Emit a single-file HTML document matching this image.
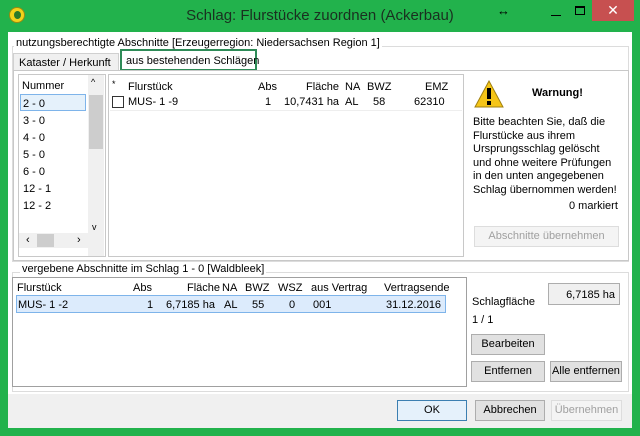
<!DOCTYPE html><html><head><style>
*{box-sizing:border-box;margin:0;padding:0}
body{width:640px;height:436px;background:#22b24c;font-family:"Liberation Sans",sans-serif;font-size:11px;color:#000;position:relative;overflow:hidden}
.a{position:absolute;white-space:nowrap}
.btn{position:absolute;border:1px solid #adadad;background:#e1e1e1;text-align:center;line-height:19px;font-size:11px}
.tb{border:1px solid #c8c8c8}
</style></head><body>
<div class="a" style="left:9px;top:7px;width:16px;height:16px;border-radius:50%;background:#f2d21a;border:1px solid #9a8a10"></div>
<div class="a" style="left:14px;top:11px;width:7px;height:8px;border-radius:50%;background:#2a7a2a"></div>
<div class="a" style="left:0;top:7px;width:640px;text-align:center;font-size:15px;color:#1a3020">Schlag: Flurstücke zuordnen (Ackerbau)</div>
<div class="a" style="left:497px;top:3px;font-size:13px">↔</div>
<div class="a" style="left:551px;top:15px;width:10px;height:1px;background:#000"></div>
<div class="a" style="left:575px;top:6px;width:10px;height:9px;border:1px solid #000;border-top-width:2px"></div>
<div class="a" style="left:592px;top:0;width:42px;height:21px;background:#c75050;color:#fff;text-align:center;font-size:14px;line-height:21px">✕</div>
<div class="a" style="left:8px;top:32px;width:624px;height:396px;background:#f0f0f0"></div>
<div class="a" style="left:8px;top:32px;width:624px;height:362px;background:#fff"></div>
<div class="a tb" style="left:12px;top:46px;width:617px;height:216px;border-color:#dcdcdc"></div>
<div class="a" style="left:14px;top:37px;background:#fff;padding:0 2px">nutzungsberechtigte Abschnitte [Erzeugerregion: Niedersachsen Region 1]</div>
<div class="a" style="left:13px;top:53px;width:106px;height:18px;border:1px solid #d0d0d0;background:#f0f0f0;padding:3px 0 0 5px">Kataster / Herkunft</div>
<div class="a" style="left:120px;top:49px;width:137px;height:22px;border:2px solid #2e8b57;background:#fff;padding:4px 0 0 4px">aus bestehenden Schlägen</div>
<div class="a tb" style="left:13px;top:70px;width:616px;height:191px"></div>
<div class="a tb" style="left:18px;top:74px;width:88px;height:183px;background:#fff"></div>
<div class="a" style="left:88px;top:75px;width:16px;height:181px;background:#f0f0f0"></div>
<div class="a" style="left:89px;top:95px;width:14px;height:54px;background:#cdcdcd"></div>
<div class="a" style="left:91px;top:77px;font-size:9px">^</div>
<div class="a" style="left:92px;top:222px;font-size:9px">v</div>
<div class="a" style="left:19px;top:233px;width:69px;height:15px;background:#f0f0f0"></div>
<div class="a" style="left:37px;top:234px;width:17px;height:13px;background:#cdcdcd"></div>
<div class="a" style="left:26px;top:234px">‹</div><div class="a" style="left:77px;top:234px">›</div>
<div class="a" style="left:22px;top:80px">Nummer</div>
<div class="a" style="left:20px;top:94px;width:66px;height:17px;border:1px solid #7eb4ea;background:#e5f1fb"></div>
<div class="a" style="left:23px;top:96px;line-height:17px">2 - 0<br>3 - 0<br>4 - 0<br>5 - 0<br>6 - 0<br>12 - 1<br>12 - 2</div>
<div class="a tb" style="left:108px;top:74px;width:356px;height:183px;background:#fff"></div>
<div class="a" style="left:112px;top:79px;font-size:9px">*</div>
<div class="a" style="left:128px;top:81px">Flurstück</div>
<div class="a" style="left:258px;top:81px">Abs</div>
<div class="a" style="left:306px;top:81px">Fläche</div>
<div class="a" style="left:345px;top:81px">NA</div>
<div class="a" style="left:367px;top:81px">BWZ</div>
<div class="a" style="left:425px;top:81px">EMZ</div>
<div class="a" style="left:112px;top:96px;width:12px;height:12px;border:1px solid #333"></div>
<div class="a" style="left:128px;top:96px">MUS- 1 -9</div>
<div class="a" style="left:265px;top:96px">1</div>
<div class="a" style="left:284px;top:96px">10,7431 ha</div>
<div class="a" style="left:345px;top:96px">AL</div>
<div class="a" style="left:373px;top:96px">58</div>
<div class="a" style="left:414px;top:96px">62310</div>
<div class="a" style="left:110px;top:110px;width:352px;height:1px;background:#eee"></div>
<svg class="a" style="left:474px;top:80px" width="30" height="28"><polygon points="15,1 29,27 1,27" fill="#f5c518" stroke="#a08010"/><rect x="13" y="8" width="4" height="11" fill="#000"/><rect x="13" y="21" width="4" height="4" fill="#000"/></svg>
<div class="a" style="left:532px;top:87px;font-weight:bold">Warnung!</div>
<div class="a" style="left:473px;top:116px;line-height:13.5px">Bitte beachten Sie, daß die<br>Flurstücke aus ihrem<br>Ursprungsschlag gelöscht<br>und ohne weitere Prüfungen<br>in den unten angegebenen<br>Schlag übernommen werden!</div>
<div class="a" style="left:569px;top:200px">0 markiert</div>
<div class="btn" style="left:474px;top:226px;width:145px;height:21px;color:#a0a0a0;background:#f4f4f4;border-color:#ddd">Abschnitte übernehmen</div>
<div class="a tb" style="left:12px;top:272px;width:617px;height:120px;border-color:#dcdcdc"></div>
<div class="a" style="left:20px;top:263px;background:#fff;padding:0 2px">vergebene Abschnitte im Schlag 1 - 0 [Waldbleek]</div>
<div class="a tb" style="left:12px;top:277px;width:455px;height:110px;border-color:#a0a0a0;background:#fff"></div>
<div class="a" style="left:17px;top:282px">Flurstück</div>
<div class="a" style="left:133px;top:282px">Abs</div>
<div class="a" style="left:187px;top:282px">Fläche</div>
<div class="a" style="left:222px;top:282px">NA</div>
<div class="a" style="left:245px;top:282px">BWZ</div>
<div class="a" style="left:278px;top:282px">WSZ</div>
<div class="a" style="left:311px;top:282px">aus Vertrag</div>
<div class="a" style="left:384px;top:282px">Vertragsende</div>
<div class="a" style="left:16px;top:295px;width:430px;height:18px;border:1px solid #7eb4ea;background:#dcebfc"></div>
<div class="a" style="left:18px;top:299px">MUS- 1 -2</div>
<div class="a" style="left:147px;top:299px">1</div>
<div class="a" style="left:166px;top:299px">6,7185 ha</div>
<div class="a" style="left:224px;top:299px">AL</div>
<div class="a" style="left:252px;top:299px">55</div>
<div class="a" style="left:289px;top:299px">0</div>
<div class="a" style="left:313px;top:299px">001</div>
<div class="a" style="left:386px;top:299px">31.12.2016</div>
<div class="a" style="left:472px;top:296px">Schlagfläche</div>
<div class="a" style="left:548px;top:283px;width:72px;height:22px;border:1px solid #adadad;background:#f0f0f0;text-align:right;padding:5px 4px 0 0">6,7185 ha</div>
<div class="a" style="left:472px;top:314px">1 / 1</div>
<div class="btn" style="left:471px;top:334px;width:74px;height:21px">Bearbeiten</div>
<div class="btn" style="left:471px;top:361px;width:74px;height:21px">Entfernen</div>
<div class="btn" style="left:550px;top:361px;width:72px;height:21px">Alle entfernen</div>
<div class="btn" style="left:397px;top:400px;width:70px;height:21px;border-color:#3c7fb1;background:#e5f1fb">OK</div>
<div class="btn" style="left:475px;top:400px;width:70px;height:21px">Abbrechen</div>
<div class="btn" style="left:551px;top:400px;width:71px;height:21px;color:#a0a0a0;background:#f4f4f4;border-color:#ddd">Übernehmen</div>
</body></html>
